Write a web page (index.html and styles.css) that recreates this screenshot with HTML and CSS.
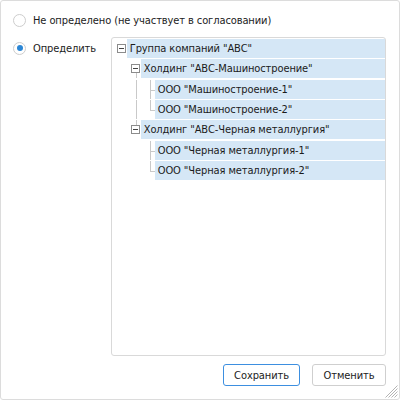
FILE: index.html
```html
<!DOCTYPE html>
<html lang="ru">
<head>
<meta charset="utf-8">
<link rel="stylesheet" href="styles.css">
</head>
<body>
<div class="dialog">
  <div class="opt opt-first">
    <span class="radio"></span>
    <span class="opt-label">Не определено (не участвует в согласовании)</span>
  </div>
  <div class="main">
    <div class="opt opt-second">
      <span class="radio checked"></span>
      <span class="opt-label">Определить</span>
    </div>
    <div class="tree">
      <div class="row">
        <span class="slot"><span class="tg"></span></span>
        <span class="label">Группа компаний "АВС"</span>
      </div>
      <div class="row">
        <span class="slot"></span>
        <span class="slot line-down"><span class="tg"></span></span>
        <span class="label">Холдинг "АВС-Машиностроение"</span>
      </div>
      <div class="row">
        <span class="slot"></span>
        <span class="slot line-full"></span>
        <span class="slot branch line-full"></span>
        <span class="label">ООО "Машиностроение-1"</span>
      </div>
      <div class="row">
        <span class="slot"></span>
        <span class="slot line-full"></span>
        <span class="slot branch line-half"></span>
        <span class="label">ООО "Машиностроение-2"</span>
      </div>
      <div class="row">
        <span class="slot"></span>
        <span class="slot line-up"><span class="tg"></span></span>
        <span class="label">Холдинг "АВС-Черная металлургия"</span>
      </div>
      <div class="row">
        <span class="slot"></span>
        <span class="slot"></span>
        <span class="slot branch line-full"></span>
        <span class="label">ООО "Черная металлургия-1"</span>
      </div>
      <div class="row">
        <span class="slot"></span>
        <span class="slot"></span>
        <span class="slot branch line-half"></span>
        <span class="label">ООО "Черная металлургия-2"</span>
      </div>
    </div>
  </div>
  <div class="buttons">
    <button class="btn btn-primary">Сохранить</button>
    <button class="btn">Отменить</button>
  </div>
  <svg class="grip" width="13" height="13" viewBox="0 0 13 13">
    <path d="M12.5 0.5 L0.5 12.5 M12.5 3.5 L3.5 12.5 M12.5 6.5 L6.5 12.5 M12.5 9.5 L9.5 12.5" stroke="#b4b4b4" stroke-width="1" fill="none"/>
  </svg>
</div>
</body>
</html>
```
FILE: styles.css
```css
html, body {
  margin: 0;
  padding: 0;
  background: #ffffff;
}
body {
  font-family: "DejaVu Sans Condensed", "DejaVu Sans", sans-serif;
  font-size: 11px;
  letter-spacing: -0.1px;
  color: #1b1b1b;
}
.dialog {
  position: relative;
  box-sizing: border-box;
  width: 400px;
  height: 400px;
  border: 1px solid #dcdcdc;
  border-radius: 3px;
  padding: 9px 13px 13px 12px;
  display: flex;
  flex-direction: column;
}
.opt {
  display: flex;
  align-items: center;
  height: 20px;
}
.opt-second {
  width: 98px;
  height: 22px;
  align-self: flex-start;
}
.radio {
  box-sizing: border-box;
  width: 13px;
  height: 13px;
  border: 1px solid #cdcdcd;
  border-radius: 50%;
  background: #fff;
  flex: none;
  display: flex;
  align-items: center;
  justify-content: center;
}
.radio.checked::after {
  content: "";
  width: 6px;
  height: 6px;
  border-radius: 50%;
  background: #2b86d5;
}
.opt-label {
  margin-left: 7px;
  white-space: nowrap;
}
.main {
  display: flex;
  margin-top: 7px;
}
.tree {
  box-sizing: border-box;
  width: 276px;
  height: 319px;
  border: 1px solid #d9d9d9;
  border-radius: 3px;
  padding: 1px 0 0 1px;
}
.row {
  display: flex;
  padding-bottom: 1.34px;
  height: 19px;
  box-sizing: content-box;
}
.slot {
  position: relative;
  width: 14px;
  flex: none;
}
.tg {
  position: absolute;
  left: 4px;
  top: 5px;
  box-sizing: border-box;
  width: 9px;
  height: 9px;
  border: 1px solid #8c8c8c;
  background: #fff;
}
.tg::after {
  content: "";
  position: absolute;
  left: 1px;
  right: 1px;
  top: 3px;
  height: 1px;
  background: #444;
}
.line-full::before,
.line-half::before,
.line-down::before,
.line-up::before {
  content: "";
  position: absolute;
  left: 9px;
  width: 1px;
  background: #c9c9c9;
}
.line-full::before { top: 0; bottom: 0; }
.line-half::before { top: 0; height: 10px; }
.line-down::before { top: 14px; bottom: 0; }
.line-up::before { top: 0; height: 5px; }
.branch::after {
  content: "";
  position: absolute;
  left: 9px;
  width: 5px;
  top: 10px;
  height: 1px;
  background: #c9c9c9;
}
.label {
  flex: 1;
  background: #d5e7f6;
  line-height: 19px;
  padding-left: 3px;
  white-space: nowrap;
}
.buttons {
  display: flex;
  justify-content: flex-end;
  gap: 12px;
  margin-top: 8px;
}
.btn {
  box-sizing: border-box;
  height: 22px;
  border: 1px solid #cfcfcf;
  border-radius: 3px;
  background: #fff;
  font-family: inherit;
  font-size: 11px;
  letter-spacing: -0.1px;
  color: #1b1b1b;
  padding: 0;
  width: 74px;
}
.btn-primary {
  width: 77px;
  border-color: #3d8fe0;
}
.grip {
  position: absolute;
  right: 1px;
  bottom: 1px;
}
```
